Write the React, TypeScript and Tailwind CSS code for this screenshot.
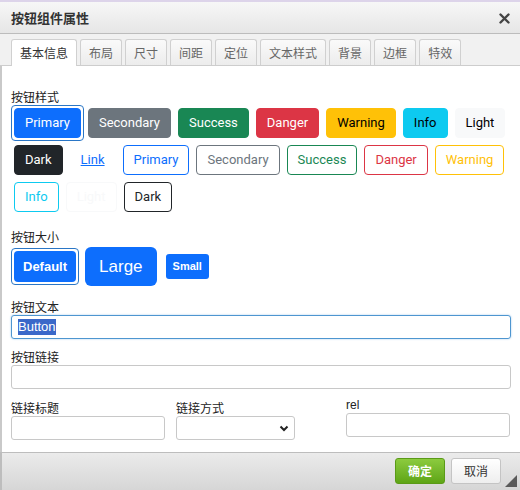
import React from 'react';

const tabs = ['基本信息', '布局', '尺寸', '间距', '定位', '文本样式', '背景', '边框', '特效'];

const styleButtons = [
  { label: 'Primary', cls: 'bg-[#0d6efd] border-[#0d6efd] text-white', selected: true },
  { label: 'Secondary', cls: 'bg-[#6c757d] border-[#6c757d] text-white' },
  { label: 'Success', cls: 'bg-[#198754] border-[#198754] text-white' },
  { label: 'Danger', cls: 'bg-[#dc3545] border-[#dc3545] text-white' },
  { label: 'Warning', cls: 'bg-[#ffc107] border-[#ffc107] text-black' },
  { label: 'Info', cls: 'bg-[#0dcaf0] border-[#0dcaf0] text-black' },
  { label: 'Light', cls: 'bg-[#f8f9fa] border-[#f8f9fa] text-black' },
  { label: 'Dark', cls: 'bg-[#212529] border-[#212529] text-white' },
  { label: 'Link', cls: 'bg-transparent border-transparent text-[#0d6efd] underline' },
  { label: 'Primary', cls: 'bg-white border-[#0d6efd] text-[#0d6efd]' },
  { label: 'Secondary', cls: 'bg-white border-[#6c757d] text-[#6c757d]' },
  { label: 'Success', cls: 'bg-white border-[#198754] text-[#198754]' },
  { label: 'Danger', cls: 'bg-white border-[#dc3545] text-[#dc3545]' },
  { label: 'Warning', cls: 'bg-white border-[#ffc107] text-[#ffc107]' },
  { label: 'Info', cls: 'bg-white border-[#0dcaf0] text-[#0dcaf0]' },
  { label: 'Light', cls: 'bg-white border-[#f8f9fa] text-[#f8f9fa]' },
  { label: 'Dark', cls: 'bg-white border-[#212529] text-[#212529]' },
];

function Pick({ selected, children }: { selected?: boolean; children: React.ReactNode }) {
  return (
    <span
      className={`inline-flex items-center p-[2px] border rounded-[4px] ${
        selected ? 'border-[#2a76c6]' : 'border-transparent'
      }`}
    >
      {children}
    </span>
  );
}

function Label({ children, className = '' }: { children: React.ReactNode; className?: string }) {
  return <div className={`text-[12px] leading-[16px] text-[#222] ${className}`}>{children}</div>;
}

export default function App() {
  return (
    <div className="w-[520px] h-[490px] flex flex-col bg-white overflow-hidden font-['Noto_Sans_CJK_SC',sans-serif]">
      {/* top stripe */}
      <div className="h-[2px] bg-[#ddd4ea]" />

      {/* title bar */}
      <div className="h-[32px] flex items-center justify-between pl-[11px] pr-[10px] border-b border-[#bcbcbc] bg-gradient-to-b from-[#f7f7f7] to-[#e6e6e6]">
        <span className="text-[13px] font-bold text-[#333]">按钮组件属性</span>
        <svg width="11" height="11" viewBox="0 0 11 11" className="mt-[1px]">
          <path d="M1.5 1.5 L9.5 9.5 M9.5 1.5 L1.5 9.5" stroke="#444" strokeWidth="2.4" strokeLinecap="round" />
        </svg>
      </div>

      {/* tabs */}
      <div className="h-[32px] flex items-end gap-[3px] pl-[11px] bg-[#f1f1f1] border-b border-[#cdcdcd]">
        {tabs.map((t, i) => (
          <div
            key={t}
            className={`h-[26px] px-[8px] flex items-center text-[12px] border border-b-0 rounded-t-[3px] border-[#d0d0d0] ${
              i === 0
                ? 'bg-white text-[#333] relative -mb-px h-[27px]'
                : 'bg-gradient-to-b from-[#fafafa] to-[#ececec] text-[#666]'
            }`}
          >
            {t}
          </div>
        ))}
      </div>

      {/* content */}
      <div className="flex-1 border-l-2 border-[#c9c9c9] pl-[9px] pr-[10px]">
        <Label className="mt-[23px]">按钮样式</Label>
        <div className="flex flex-wrap gap-x-[1px] gap-y-[1px] font-['Roboto',sans-serif]">
          {styleButtons.map((b, i) => (
            <Pick key={i} selected={b.selected}>
              <span
                className={`h-[30px] px-[10px] flex items-center border rounded-[4px] text-[13px] ${b.cls}`}
              >
                {b.label}
              </span>
            </Pick>
          ))}
        </div>

        <Label className="mt-[14px]">按钮大小</Label>
        <div className="flex items-center gap-[5px] mt-[2px] font-['Liberation_Sans',sans-serif]">
          <Pick selected>
            <span className="h-[31px] px-[9px] flex items-center rounded-[4px] bg-[#0d6efd] text-white text-[13px] font-bold">
              Default
            </span>
          </Pick>
          <span className="ml-[1px] h-[39px] px-[14px] flex items-center rounded-[6px] bg-[#0d6efd] text-white text-[17px]">
            Large
          </span>
          <span className="ml-[4px] h-[25px] px-[7px] flex items-center rounded-[3px] bg-[#0d6efd] text-white text-[11px] font-bold">
            Small
          </span>
        </div>

        <Label className="mt-[13px]">按钮文本</Label>
        <div className="h-[24px] w-[500px] flex items-center px-[6px] border border-[#4e96d0] rounded-[3px] shadow-[0_0_2px_#9cc7ec] font-['Liberation_Sans',sans-serif] text-[13px]">
          <span className="bg-[#3a68c9] text-white leading-[16px]">Button</span>
        </div>

        <Label className="mt-[10px]">按钮链接</Label>
        <div className="h-[24px] w-[500px] border border-[#c8c8c8] rounded-[3px]" />

        <div className="flex mt-[11px]">
          <div className="w-[154px]">
            <Label>链接标题</Label>
            <div className="h-[24px] border border-[#c8c8c8] rounded-[3px]" />
          </div>
          <div className="w-[119px] ml-[11px]">
            <Label>链接方式</Label>
            <div className="h-[24px] border border-[#c8c8c8] rounded-[3px] flex items-center justify-end pr-[5px]">
              <svg width="10" height="7" viewBox="0 0 10 7">
                <path d="M1.5 1.5 L5 5 L8.5 1.5" stroke="#222" strokeWidth="2" fill="none" />
              </svg>
            </div>
          </div>
          <div className="w-[164px] ml-[51px] -mt-[3px]">
            <Label className="font-['Liberation_Sans',sans-serif]">rel</Label>
            <div className="h-[24px] border border-[#c8c8c8] rounded-[3px]" />
          </div>
        </div>
      </div>

      {/* footer */}
      <div className="relative h-[38px] flex items-start justify-end gap-[6px] pt-[5px] pr-[19px] border-t border-l-2 border-[#bdbdbd] bg-gradient-to-b from-[#ebebeb] to-[#d6d6d6]">
        <span className="h-[26px] w-[50px] flex items-center justify-center rounded-[3px] border border-[#5a9a17] bg-gradient-to-b from-[#8ccb3e] to-[#5ea515] text-white text-[12px] font-bold">
          确定
        </span>
        <span className="h-[26px] w-[50px] flex items-center justify-center rounded-[3px] border border-[#c4c4c4] bg-gradient-to-b from-white to-[#eeeeee] text-[#333] text-[12px]">
          取消
        </span>
        <svg width="12" height="12" viewBox="0 0 12 12" className="absolute right-[3px] bottom-[3px]">
          <path d="M12 0 L12 12 L0 12 Z" fill="#5a5a5a" />
        </svg>
      </div>
    </div>
  );
}
